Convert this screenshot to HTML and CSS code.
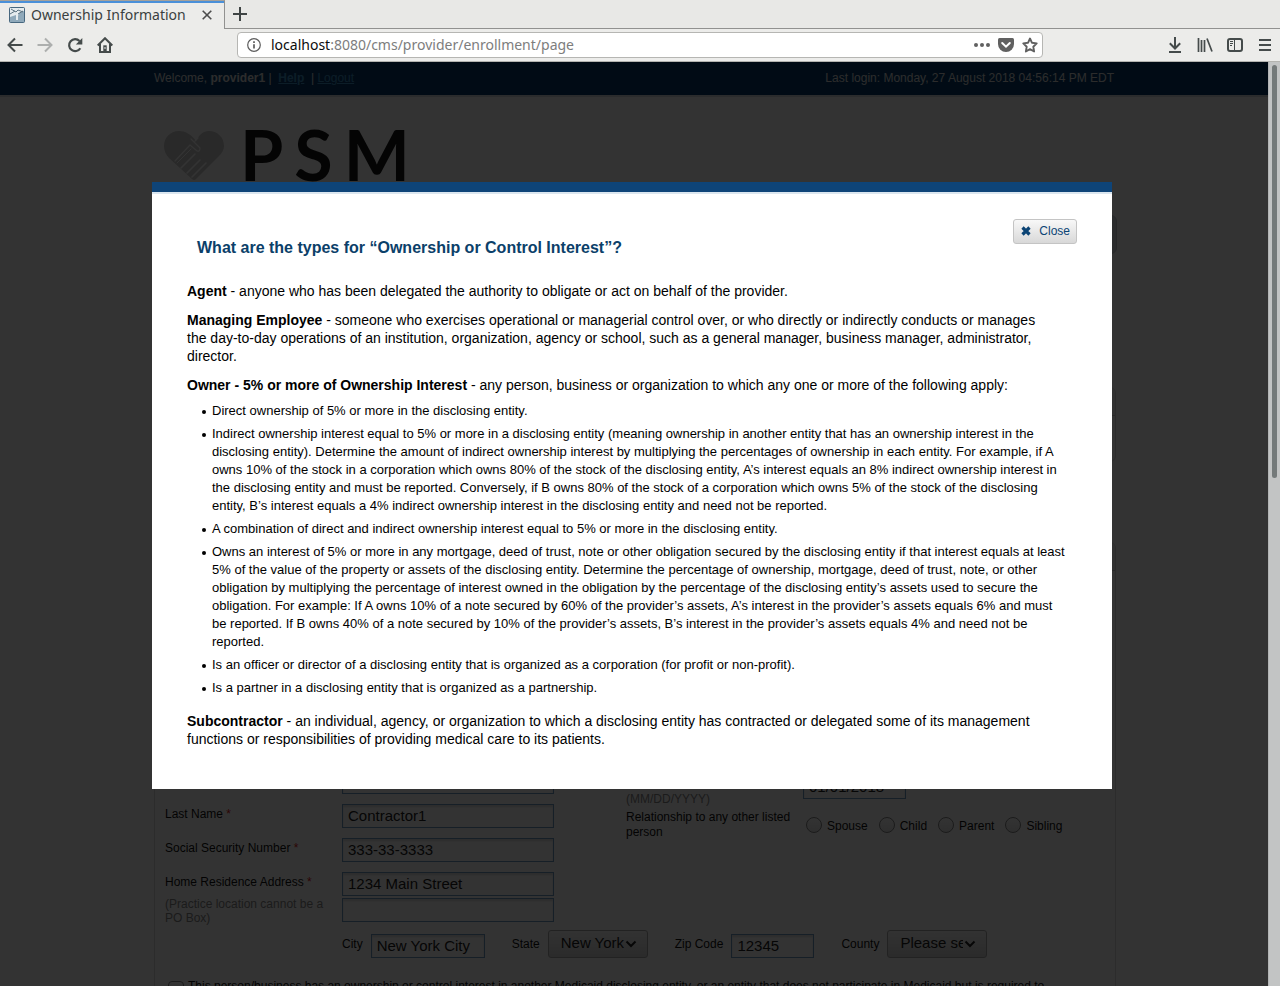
FILE: index.html
```html
<!DOCTYPE html>
<html lang="en">
<head>
<meta charset="utf-8">
<title>Ownership Information</title>
<link rel="stylesheet" href="styles.css">
</head>
<body>
<header class="browser">
  <div class="tabstrip">
    <div class="tab">
      <svg class="favicon" width="16" height="16" viewBox="0 0 16 16"><rect x=".5" y=".5" width="15" height="15" rx="1" fill="#8fa9ba" stroke="#47677e"/><path d="M1 1h14v3l-5 2-1 3v4H7V8L1 10z" fill="#e4ebee"/><path d="M2 2l5 3 2-2 5 2M1 7l5-3M9 7l5-3" stroke="#5d7482" fill="none"/></svg>
      <span class="tab-title">Ownership Information</span>
      <button class="icon-btn" aria-label="Close tab"><svg width="10" height="10" viewBox="0 0 10 10"><path d="M.7.7l8.6 8.6M9.3.7L.7 9.3" stroke="#4c4c4c" stroke-width="1.6"/></svg></button>
    </div>
    <button class="icon-btn new-tab" aria-label="New tab"><svg width="14" height="14" viewBox="0 0 14 14"><path d="M7 0v14M0 7h14" stroke="#3e4444" stroke-width="2"/></svg></button>
  </div>
  <div class="toolbar">
    <div class="nav-buttons">
      <button class="icon-btn" aria-label="Back"><svg width="16" height="16" viewBox="0 0 16 16"><path d="M15.5 8H1.5M8 1.5L1.5 8 8 14.500" fill="none" stroke="#454b4b" stroke-width="2"/></svg></button>
      <button class="icon-btn" aria-label="Forward"><svg width="16" height="16" viewBox="0 0 16 16"><path d="M.5 8h14M8 1.500L14.500 8 8 14.500" fill="none" stroke="#adafae" stroke-width="2"/></svg></button>
      <button class="icon-btn" aria-label="Reload"><svg width="16" height="16" viewBox="0 0 16 16"><path d="M13.300 11.200A6 6 0 1 1 12.500 4" fill="none" stroke="#454b4b" stroke-width="2.200"/><path d="M15.300 1v6.500H8.800z" fill="#454b4b"/></svg></button>
      <button class="icon-btn" aria-label="Home"><svg width="16" height="16" viewBox="0 0 16 16"><path d="M.7 8.500L8 1.200l7.300 7.300M3 7v8h10V7" fill="none" stroke="#454b4b" stroke-width="2"/><path d="M6.300 15V8.300h3.400V15z" fill="#454b4b"/><path d="M8 10v2" stroke="#ececea"/></svg></button>
    </div>
    <div class="urlbar">
      <svg width="14" height="14" viewBox="0 0 14 14"><circle cx="7" cy="7" r="6.300" fill="none" stroke="#5c5c5c" stroke-width="1.200"/><path d="M7 6.200V10.500M7 3.300v1.600" stroke="#5c5c5c" stroke-width="1.700"/></svg>
      <span class="url"><span class="host">localhost</span>:8080/cms/provider/enrollment/page</span>
      <svg width="16" height="16" viewBox="0 0 16 16"><g fill="#606060"><circle cx="2" cy="8" r="2"/><circle cx="8" cy="8" r="2"/><circle cx="14" cy="8" r="2"/></g></svg>
      <svg width="16" height="16" viewBox="0 0 16 16"><path d="M1.500 1h13Q16 1 16 2.500V7A8 8 0 0 1 0 7V2.500Q0 1 1.500 1z" fill="#606060"/><path d="M4.200 6L8 9.700 11.800 6" fill="none" stroke="#fff" stroke-width="2" stroke-linecap="round"/></svg>
      <svg width="16" height="16" viewBox="0 0 16 16"><path d="M8 1.500l2 4.300 4.700.6-3.400 3.300.8 4.800L8 12.200l-4.100 2.300.8-4.800L1.300 6.400 6 5.800z" fill="none" stroke="#606060" stroke-width="1.900" stroke-linejoin="round"/></svg>
    </div>
    <div class="tool-buttons">
      <button class="icon-btn" aria-label="Downloads"><svg width="16" height="16" viewBox="0 0 16 16"><path d="M8 0v11M2.800 6.300L8 11.500l5.200-5.200M2 15h12" fill="none" stroke="#454b4b" stroke-width="2"/></svg></button>
      <button class="icon-btn" aria-label="Library"><svg width="16" height="16" viewBox="0 0 16 16"><path d="M1.500 1v14M4.500 3v12M7.500 3v12M10 1.500l5 13" fill="none" stroke="#454b4b" stroke-width="1.700"/></svg></button>
      <button class="icon-btn" aria-label="Sidebar"><svg width="16" height="16" viewBox="0 0 16 16"><rect x="1" y="2" width="14" height="12" rx="2" fill="none" stroke="#454b4b" stroke-width="2"/><path d="M7.500 2v12M3 4.500h3M3 6.500h3M3 8.500h2" stroke="#454b4b"/></svg></button>
      <button class="icon-btn menu" aria-label="Menu"><svg width="12" height="16" viewBox="0 0 12 16"><path d="M0 3h12M0 8h12M0 13h12" stroke="#454b4b" stroke-width="2"/></svg></button>
    </div>
  </div>
</header>

<div class="viewport">
  <div class="page">
    <div class="topbar">
      <div class="wrap topbar-row">
        <div class="welcome">Welcome, <b>provider1</b> |&nbsp; <a href="#"><b>Help</b></a> &nbsp;| <a href="#">Logout</a></div>
        <div>Last login: Monday, 27 August 2018 04:56:14 PM EDT</div>
      </div>
    </div>
    <div class="wrap logo">
      <svg width="60" height="50" viewBox="0 0 60 50"><path d="M32 10C27 3 21 0 15 0 6 0 0 7 0 15c0 5 2 9 5 12l23 21q2 2 4 0l22-22c4-4 6-7 6-11C60 6 53 0 45 0c-6 0-10 4-13 10z" fill="#cbcbcb"/><g fill="none" stroke="#fff" stroke-linecap="round" stroke-linejoin="round"><path d="M31 10l3-3M27 8l9 9q0 4-3 3l-7-6-15 16" stroke-width="1.200"/><path d="M13 32l14-14" stroke-width="1"/><path d="M17 37l14-14M23 42l13-13M28 46l14-14" stroke-width="1.600"/></g></svg>
      <div class="wordmark"><span>P</span><span>S</span><span>M</span></div>
    </div>
    <div class="wrap content">
      <div class="nav"></div>
      <section class="panel summary"><div class="panel-head"></div></section>
      <section class="panel owners">
        <div class="panel-head"></div>
        <form class="panel-body">
          <div class="columns">
            <div class="left">
              <div class="row"><span class="label"></span><input class="text" type="text" aria-label="First name"></div>
              <div class="row"><label class="label" for="last">Last Name <i>*</i></label><input class="text" id="last" type="text" value="Contractor1"></div>
              <div class="row"><label class="label" for="ssn">Social Security Number <i>*</i></label><input class="text" id="ssn" type="text" value="333-33-3333"></div>
              <div class="row">
                <div class="label"><label for="addr">Home Residence Address <i>*</i></label><div class="hint">(Practice location cannot be a PO Box)</div></div>
                <div class="stack"><input class="text" id="addr" type="text" value="1234 Main Street"><input class="text" type="text" aria-label="Address line 2"></div>
              </div>
            </div>
            <div class="right">
              <div class="row date"><label class="label hint" for="date">(MM/DD/YYYY)</label><input class="text short" id="date" type="text" value="01/01/2018"></div>
              <div class="row relation">
                <span class="label">Relationship to any other listed person</span>
                <div class="radios">
                  <label><input type="radio" name="rel"><span>Spouse</span></label>
                  <label><input type="radio" name="rel"><span>Child</span></label>
                  <label><input type="radio" name="rel"><span>Parent</span></label>
                  <label><input type="radio" name="rel"><span>Sibling</span></label>
                </div>
              </div>
            </div>
          </div>
          <div class="city-row">
            <div class="pair"><label for="city">City</label><input class="text city" id="city" type="text" value="New York City"></div>
            <div class="pair"><label for="state">State</label><div class="select"><select id="state"><option>New York</option></select><svg width="12" height="8" viewBox="0 0 12 8"><path d="M1.500 1.500L6 6l4.500-4.500" fill="none" stroke="#222" stroke-width="2"/></svg></div></div>
            <div class="pair"><label for="zip">Zip Code</label><input class="text zip" id="zip" type="text" value="12345"></div>
            <div class="pair"><label for="county">County</label><div class="select"><select id="county"><option>Please select</option></select><svg width="12" height="8" viewBox="0 0 12 8"><path d="M1.500 1.500L6 6l4.500-4.500" fill="none" stroke="#222" stroke-width="2"/></svg></div></div>
          </div>
          <label class="check"><input type="checkbox"><span>This person/business has an ownership or control interest in another Medicaid disclosing entity, or an entity that does not participate in Medicaid but is required to</span></label>
        </form>
      </section>
    </div>
    <div class="overlay">
      <div class="modal" role="dialog" aria-labelledby="modal-title">
        <div class="modal-head">
          <h2 id="modal-title">What are the types for “Ownership or Control Interest”?</h2>
          <button class="close"><svg width="10" height="10" viewBox="0 0 10 10"><path d="M1.500 1.500l7 7M8.500 1.500l-7 7" stroke="#0b4475" stroke-width="3.200"/></svg>Close</button>
        </div>
        <p><b>Agent</b> - anyone who has been delegated the authority to obligate or act on behalf of the provider.</p>
        <p><b>Managing Employee</b> - someone who exercises operational or managerial control over, or who directly or indirectly conducts or manages the day-to-day operations of an institution, organization, agency or school, such as a general manager, business manager, administrator, director.</p>
        <p><b>Owner - 5% or more of Ownership Interest</b> - any person, business or organization to which any one or more of the following apply:</p>
        <ul>
          <li>Direct ownership of 5% or more in the disclosing entity.</li>
          <li>Indirect ownership interest equal to 5% or more in a disclosing entity (meaning ownership in another entity that has an ownership interest in the disclosing entity). Determine the amount of indirect ownership interest by multiplying the percentages of ownership in each entity. For example, if A owns 10% of the stock in a corporation which owns 80% of the stock of the disclosing entity, A’s interest equals an 8% indirect ownership interest in the disclosing entity and must be reported. Conversely, if B owns 80% of the stock of a corporation which owns 5% of the stock of the disclosing entity, B’s interest equals a 4% indirect ownership interest in the disclosing entity and need not be reported.</li>
          <li>A combination of direct and indirect ownership interest equal to 5% or more in the disclosing entity.</li>
          <li>Owns an interest of 5% or more in any mortgage, deed of trust, note or other obligation secured by the disclosing entity if that interest equals at least 5% of the value of the property or assets of the disclosing entity. Determine the percentage of ownership, mortgage, deed of trust, note, or other obligation by multiplying the percentage of interest owned in the obligation by the percentage of the disclosing entity’s assets used to secure the obligation. For example: If A owns 10% of a note secured by 60% of the provider’s assets, A’s interest in the provider’s assets equals 6% and must be reported. If B owns 40% of a note secured by 10% of the provider’s assets, B’s interest in the provider’s assets equals 4% and need not be reported.</li>
          <li>Is an officer or director of a disclosing entity that is organized as a corporation (for profit or non-profit).</li>
          <li>Is a partner in a disclosing entity that is organized as a partnership.</li>
        </ul>
        <p><b>Subcontractor</b> - an individual, agency, or organization to which a disclosing entity has contracted or delegated some of its management functions or responsibilities of providing medical care to its patients.</p>
      </div>
    </div>
  </div>
  <div class="scrollbar"><div class="thumb"></div></div>
</div>
</body>
</html>
```

FILE: styles.css
```css
* { box-sizing: border-box; }
body {
  margin: 0;
  height: 100vh;
  display: flex;
  flex-direction: column;
  overflow: hidden;
  font: 12px/20px "Liberation Sans", Arial, sans-serif;
  color: #111;
}
svg { display: block; flex: none; }
input, select, button { font-family: inherit; margin: 0; }

/* Browser chrome */
.browser { flex: none; background: #ececea; font-family: "Noto Sans", "Open Sans", sans-serif; border-bottom: 1px solid #b4b4b0; }
.tabstrip { display: flex; height: 29px; background: #e8e8e6; }
.tab {
  width: 225px;
  display: flex;
  align-items: center;
  padding: 0 12px 0 9px;
  background: #ececea;
  border-top: 1px solid #a5a19b;
  border-right: 1px solid #919190;
  box-shadow: inset 0 2px #4a90d9;
}
.tab-title { flex: 1; margin-left: 6px; font-size: 14px; color: #3a3f40; white-space: nowrap; }
.icon-btn { display: flex; padding: 0; border: 0; background: none; }
.new-tab { flex: 1; align-items: center; padding-left: 8px; border-bottom: 1px solid #919190; }
.toolbar { display: flex; align-items: center; height: 32px; padding: 0 9px 0 7px; }
.nav-buttons { display: flex; gap: 14px; width: 230px; }
.urlbar {
  flex: 1;
  display: flex;
  align-items: center;
  gap: 8px;
  height: 26px;
  padding: 0 4px 0 9px;
  background: #fff;
  border: 1px solid #b6b6b3;
  border-radius: 4px;
}
.url { flex: 1; padding-left: 2px; font-size: 14px; color: #7d7d7d; }
.host { color: #0c0c0c; }
.tool-buttons { display: flex; gap: 14px; margin-left: 124px; }
.menu { padding-left: 2px; }

/* Page */
.viewport { flex: 1; min-height: 0; display: flex; }
.page { flex: 1; min-width: 0; position: relative; overflow: hidden; background: #fff; }
.scrollbar { width: 12px; padding: 3px; background: #c2c4c4; border-left: 1px solid #b2b4b4; }
.thumb { height: 45%; border-radius: 3px; background: #747a7a; }
.wrap { width: 960px; max-width: 100%; margin: 0 auto; }
.topbar { background: #073b6c; border-bottom: 2px solid #d5dade; color: #ddd; }
.topbar-row { display: flex; justify-content: space-between; height: 33px; line-height: 32px; }
.topbar a { color: #3f92c4; }
.logo { display: flex; align-items: center; gap: 16px; height: 118px; padding: 0 10px; }
.wordmark { display: flex; gap: 11px; padding-bottom: 4px; font: 700 70px/70px Lato, sans-serif; color: #161616; }
.nav { width: 963px; height: 39px; border: 1px solid #c4c8ce; border-radius: 6px; background: #d6dce2; }
.panel { width: 962px; border: 1px solid #ddd; border-radius: 6px; }
.panel-head { height: 28px; background: #f2f2f2; border-bottom: 1px solid #ccc; border-radius: 5px 5px 0 0; }
.summary { height: 75px; margin-top: 133px; }
.owners { margin-top: 80px; }
.panel-body { padding: 199px 10px 0; }
.columns { display: flex; gap: 72px; }
.left, .right { display: flex; flex-direction: column; gap: 10px; }
.right { flex: 1; padding-top: 5px; }
.row { display: flex; }
.label { width: 177px; flex: none; padding-right: 8px; }
i { font-style: normal; color: #d22; }
.hint { color: #888; line-height: 14px; margin-top: 5px; }
.stack { display: flex; flex-direction: column; gap: 2px; }
.text {
  width: 212px;
  height: 24px;
  padding: 0 5px 2px;
  border: 1px solid #6d9dc0;
  background: #fff;
  box-shadow: inset 0 2px 2px #ddd;
  font-size: 15px;
  color: #222;
}
.short { width: 103px; }
.city { width: 114px; }
.zip { width: 83px; }
.date .label { margin-top: 17px; }
.relation { line-height: 15px; margin-top: -6px; }
.radios { display: flex; gap: 11px; padding: 7px 0 0 3px; }
.radios label { display: flex; gap: 5px; }
.radios span { padding-top: 2px; }
.radios input, .check input {
  appearance: none;
  width: 16px;
  height: 16px;
  border: 1px solid #888;
  border-radius: 50%;
  background: linear-gradient(#fff, #e4e4e4);
}
.city-row { display: flex; gap: 27px; margin: 5px 0 22px 177px; }
.pair { display: flex; gap: 8px; align-items: flex-end; line-height: 28px; }
.select { position: relative; }
select {
  display: block;
  appearance: none;
  width: 100px;
  height: 28px;
  padding: 0 23px 3px 12px;
  border: 1px solid #aaa;
  border-radius: 3px;
  background: linear-gradient(#fafafa, #d4d4d4);
  font-size: 15px;
  color: #222;
}
.select svg { position: absolute; right: 11px; top: 10px; }
.check { display: flex; gap: 4px; padding-left: 3px; line-height: 12px; white-space: nowrap; }
.check input { border-radius: 4px; margin-top: 1px; flex: none; }

/* Dialog */
.overlay {
  position: absolute;
  inset: 0;
  padding: 120px 4px 0 0;
  background: rgba(0, 0, 0, 0.8);
}
.modal {
  width: 960px;
  max-width: 100%;
  margin: 0 auto;
  padding: 25px 35px 30px;
  border-top: 10px solid #0e4478;
  background: #fff;
  box-shadow: inset 0 2px #dbe6ef;
  color: #000;
  font-size: 14px;
  line-height: 18px;
}
.modal-head { display: flex; justify-content: space-between; align-items: flex-start; margin-bottom: 25px; }
h2 { margin: 22px 0 0 10px; font-size: 16px; line-height: 18px; color: #0b4069; }
.close {
  display: flex;
  align-items: center;
  gap: 8px;
  height: 25px;
  margin-top: 2px;
  padding: 0 6px 2px 7px;
  border: 1px solid #c4c4c4;
  border-radius: 3px;
  background: linear-gradient(#f8f8f8, #d8d8d8);
  font-size: 12px;
  color: #0b4475;
}
.modal p { margin: 0 0 11px; padding-right: 27px; }
.modal ul { margin: -3px 0 15px; padding: 0 10px 0 25px; font-size: 13px; }
.modal li { margin-bottom: 5px; list-style: none; display: flex; }
.modal li::before { content: ""; flex: none; width: 4px; height: 4px; margin: 8px 6px 0 -10px; border-radius: 50%; background: #000; }
```
